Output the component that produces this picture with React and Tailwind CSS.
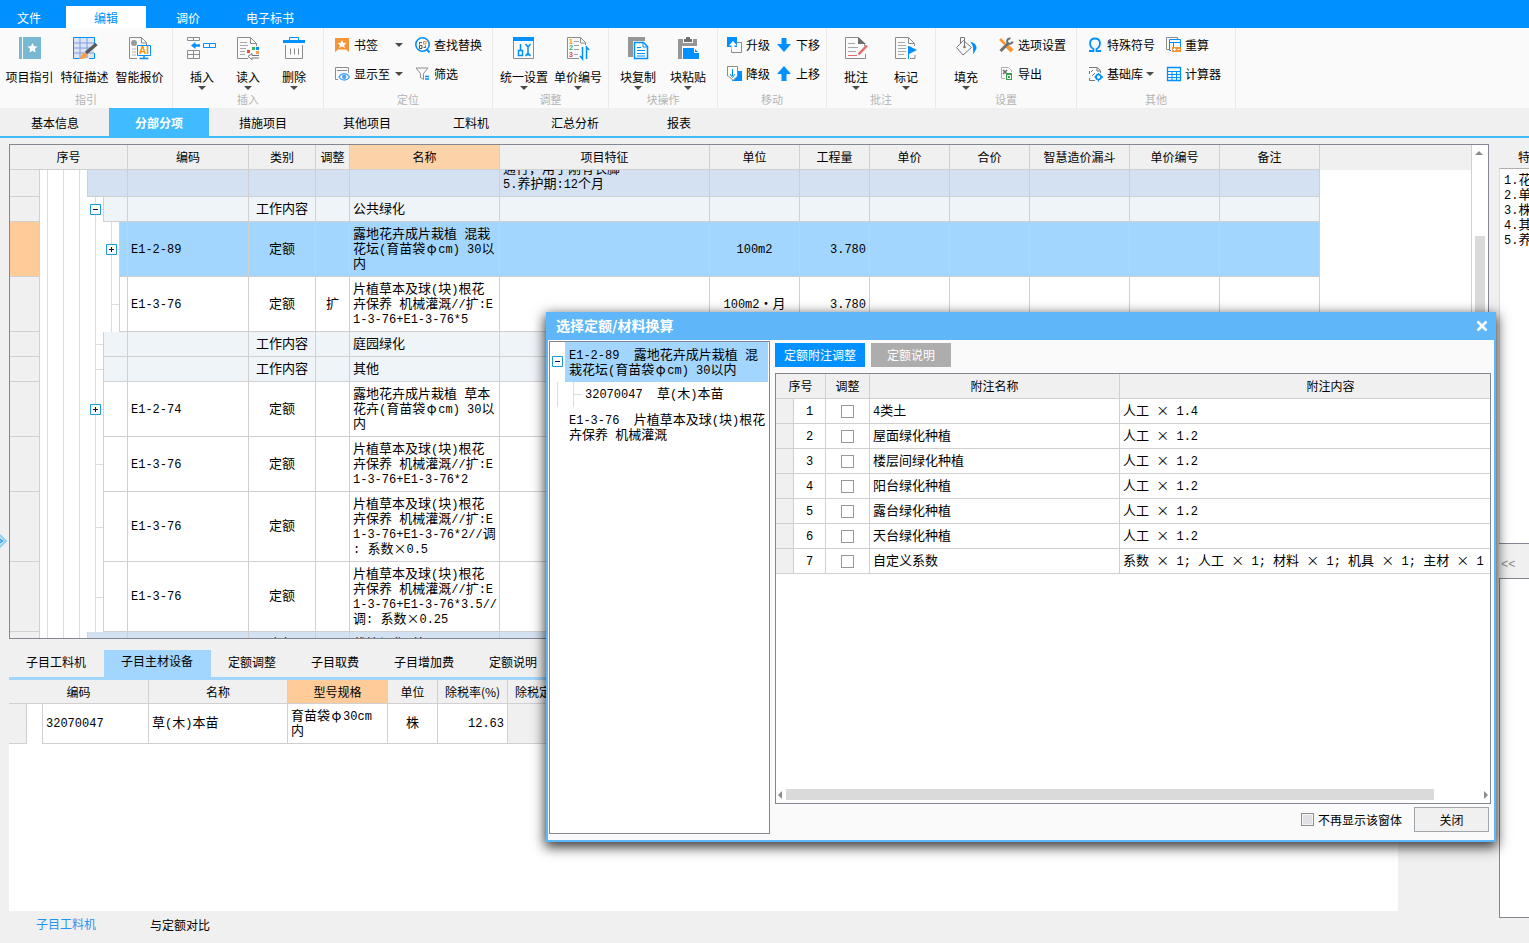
import { Fragment } from 'react'

const BLUE = '#0090ff'
const GRAY = '#8c8c8c'

/* ---------- big ribbon icons ---------- */

const Big = ({ w = 24, children }) => (
  <svg width={w} height="24" viewBox={`0 0 ${w} 24`} fill="none" aria-hidden="true">{children}</svg>
)

const GuideIcon = () => (
  <Big>
    <path d="M1 0h3v22H1zM5 0h18v22H5z" fill="#78b8d3" />
    <path d="M14.500 6l1.500 3.200 3.500.4-2.600 2.400.7 3.500-3.100-1.800-3.100 1.800.7-3.500L9.500 9.600l3.500-.4z" fill="#fff" />
  </Big>
)

const DescribeIcon = () => (
  <Big w={26}>
    <path d="M1 1h21v20H1z" fill="#dbe5f6" />
    <path d="M1 6h21M1 11h21M1 16h21M8 1v20M15 1v20" stroke="#7e9bd8" />
    <path d="M10 21.500H1.500V.500h21V8M22.500 16v5.500H17" stroke={BLUE} />
    <path d="M24.500 7L14 16" stroke="#5a5a5a" strokeWidth="3.500" />
    <path d="M6 22c3-1 3-4 5-6 2-1 5 1 4 3-1 3-5 3-9 3z" fill="#f5a04c" />
  </Big>
)

const AiQuoteIcon = () => (
  <Big>
    <path d="M9 21.500H1.500V.500h12l5 5V8M13.500.500V6h5" stroke={GRAY} />
    <circle cx="6" cy="6" r="3" fill="#9a9a9a" />
    <path d="M4 12h4M4 15h4M4 18h4" stroke="#b5b5b5" />
    <path d="M9.500 8.500h13v10h-13z" fill="#fff" stroke={BLUE} />
    <path d="M16 19v2.500M11.500 21.500h9" stroke={BLUE} strokeWidth="1.500" />
    <text x="11" y="17" fontSize="10" fontWeight="700" fontFamily="Liberation Sans, sans-serif" fill="#f5900c">AI</text>
  </Big>
)

const InsertIcon = () => (
  <Big w={30}>
    <path d="M.500.500h12v3H.500zM6.500.500v3M.500 13.500h12v8H.500zM.500 17.500h12M6.500 13.500v8" stroke={GRAY} />
    <path d="M4 8.500L8.500 5v2.200H13v2.600H8.500V12z" fill={BLUE} />
    <path d="M16.500 6.500h12v4h-12zM22.500 6.500v4" stroke={BLUE} />
  </Big>
)

const ReadIcon = () => (
  <Big>
    <path d="M12 21.500H1.500V.500h13l6 6V9M14.500.500v6h6" stroke={GRAY} />
    <path d="M4 5.500h7M4 8.500h8M4 11.500h6M4 14.500h5M4 17.500h5" stroke="#a8a8a8" />
    <path d="M11 13h3v3h-3z" fill="#f04e23" />
    <path d="M16 10h3v3h-3z" fill="#3fb54a" />
    <path d="M20 10h3v3h-3z" fill={BLUE} />
    <path d="M20 14h3v3h-3z" fill="#f5a04c" />
    <path d="M23 18.500h-7v-2l-4 3 4 3v-1.500h7" stroke="#777" />
  </Big>
)

const DeleteIcon = () => (
  <Big>
    <path d="M7.500 3V.500h9V3" stroke={BLUE} />
    <path d="M1 3h22v3H1z" fill={BLUE} />
    <path d="M3.500 8v13.500h17V8M8.500 11.500v6M12.500 11.500v6M16.500 11.500v6" stroke={GRAY} />
  </Big>
)

const SettingsIcon = () => (
  <Big>
    <path d="M1.500 3v18.500h20V3" stroke={GRAY} />
    <path d="M1 0h21v4H1z" fill={BLUE} />
    <path d="M8.500 7v6M6.500 13.500h4v5h-4zM16 10v8.500M13.500 7l2.500 3L18.500 7M13.500 19l2.500-3 2.500 3" stroke={BLUE} strokeWidth="1.500" />
  </Big>
)

const NumberIcon = () => (
  <Big>
    <path d="M13 21.500H1.500V.500h13l5 5V8M14.500.500V6h5" stroke={GRAY} />
    <path d="M8 4.500h5M8 8.500h5M8 12.500h5M8 17.500h4" stroke="#a0a0a0" />
    <g fontSize="7" fontWeight="700" fontFamily="Liberation Sans, sans-serif">
      <text x="3" y="7" fill="#f5900c">1</text>
      <text x="3" y="13" fill="#3fb54a">2</text>
      <text x="3" y="20" fill="#e04848">3</text>
    </g>
    <path d="M16.500 10v12l-2.500-3M20.500 22V10l2.500 3" stroke={BLUE} strokeWidth="1.500" />
  </Big>
)

const CopyIcon = () => (
  <Big>
    <path d="M2 0h17v4H7v16H2z" fill="#969696" />
    <path d="M8.500 5.500h9l4 4v12h-13z" fill="#fff" stroke={BLUE} strokeWidth="1.500" />
    <path d="M17 5v5h5M11 10.500h4M11 13.500h8M11 16.500h8M11 19h8" stroke={BLUE} />
  </Big>
)

const PasteIcon = () => (
  <Big>
    <path d="M2 2h5v4h10V2h4v7H6v13H2z" fill="#969696" />
    <path d="M8 2h2V0h4v2h2v3H8z" fill="#707070" />
    <path d="M7 11h11l5 5v6H7z" fill={BLUE} />
    <path d="M18.500 10.500V15.500H23" stroke="#fff" />
  </Big>
)

const CommentIcon = () => (
  <Big>
    <path d="M21.500 17v4.500h-20V.500h13l6 6V9" stroke={GRAY} />
    <path d="M14 0v7h8z" fill="#6e6e6e" />
    <path d="M4 6.500h7M4 10.500h10M4 14.500h8" stroke="#a8a8a8" />
    <path d="M4 18.500h9" stroke="#e06a6a" />
    <path d="M23 8.500L14.500 17.500" stroke="#e06a6a" strokeWidth="2.500" />
  </Big>
)

const MarkIcon = () => (
  <Big>
    <path d="M12 21.500H1.500V.500h13l6 6V9M14.500.500v6h6M16 21.500h5V18" stroke={GRAY} />
    <path d="M4 5.500h7M4 8.500h8M4 11.500h8M4 14.500h8M4 17.500h6" stroke="#a8a8a8" />
    <path d="M14.500 9v13" stroke={BLUE} />
    <path d="M15 9l8 4-8 4z" fill={BLUE} />
  </Big>
)

const FillIcon = () => (
  <Big>
    <path d="M2.500 10.500l7-7 8 7-8.500 7.500zM6.500 7V.500h4V10" stroke="#777" />
    <circle cx="10.500" cy="10" r="1.300" fill="#777" />
    <path d="M16 5c4 0 7 3 6.500 6.500l-3 5.500c-1-4 1-8-3.500-12z" fill={BLUE} />
  </Big>
)

/* ---------- small ribbon icons ---------- */

const Small = ({ children }) => (
  <svg width="16" height="16" viewBox="0 0 16 16" fill="none" className="shrink-0" aria-hidden="true">{children}</svg>
)

const BookmarkIcon = () => (
  <Small>
    <path d="M0 1h14v14l-3-2.500H3L0 15z" fill="#f79433" />
    <path d="M7 3l1.400 2.800 3 .3-2.200 2 .7 3L7 9.600l-2.900 1.500.7-3-2.200-2 3-.3z" fill="#fff" />
  </Small>
)

const ShowIcon = () => (
  <Small>
    <path d="M3 13.500H.500V1.500h13V7M2 4.500h10" stroke={GRAY} />
    <path d="M4 11c2.500-4.500 8-4.500 10.500 0-2.500 4-8 4-10.500 0z" fill="#fff" stroke="#4aa3f0" strokeWidth="1.300" />
    <circle cx="9.200" cy="10.800" r="2.200" fill="#4aa3f0" />
  </Small>
)

const FindIcon = () => (
  <Small>
    <circle cx="7.500" cy="7.500" r="6.700" stroke={BLUE} strokeWidth="1.600" />
    <path d="M11.500 12l3 3.500" stroke={BLUE} strokeWidth="2" />
    <path d="M4.500 8.500h2.500v3H4.500zM7 5.500H4.500v2M8.500 10.500h2v-2" stroke="#555" />
    <path d="M8.500 4.500h2.500v2.500H8.500z" stroke="#f5900c" />
  </Small>
)

const FilterIcon = () => (
  <Small>
    <path d="M1 2h12L8.500 7.500v6l-3-2v-4z" stroke={GRAY} />
    <path d="M10 10.500h4M10 13h4" stroke={BLUE} strokeWidth="1.300" />
  </Small>
)

const UpgradeIcon = () => (
  <Small>
    <path d="M9.500 5.500h5v10h-10V12" stroke={GRAY} />
    <path d="M0 0h10v10H7v2H4v-2H0z" fill={BLUE} />
    <path d="M6 4l4 4.500H7.500V13h-3V8.500H2z" fill="#fff" />
  </Small>
)

const DowngradeIcon = () => (
  <Small>
    <path d="M6 5h9v10H5v-4z" fill={BLUE} />
    <path d="M.500.500h10V10L6 14.500 1.500 10H.500z" fill="#fff" stroke={GRAY} />
    <path d="M5.500 3v7M3 8l2.500 3.500L8 8" stroke={BLUE} />
  </Small>
)

const DownIcon = () => (
  <Small><path d="M4.500 1h5v6H14l-7 8-7-8h4.500z" fill={BLUE} /></Small>
)

const UpIcon = () => (
  <Small><path d="M4.500 15h5V8H14L7 0 0 8h4.500z" fill={BLUE} /></Small>
)

const ToolsIcon = () => (
  <Small>
    <path d="M1 2l5 5" stroke="#f79433" strokeWidth="2.500" />
    <path d="M8 9l5 5" stroke="#f79433" strokeWidth="4" />
    <path d="M1.500 14l8-8" stroke="#6e6e6e" strokeWidth="3" />
    <path d="M11.500 1.500a2.700 2.700 0 1 0 2 3" stroke="#6e6e6e" strokeWidth="2" />
  </Small>
)

const ExportIcon = () => (
  <Small>
    <path d="M6 12.500H2.500V1.500h7l3 3V6" stroke="#b0b0b0" />
    <path d="M4 4l4 4M8 4L4 8" stroke="#666" strokeWidth="1.500" />
    <path d="M7 7h6v7H7z" fill="#3c9d4e" />
    <path d="M8.500 9.500h3v3h-3z" stroke="#fff" />
  </Small>
)

const OmegaIcon = () => (
  <Small>
    <path d="M1 14h4.500v-2C.500 9 1 1.500 7 1.500S13.500 9 8.500 12v2H13" stroke={BLUE} strokeWidth="1.800" />
  </Small>
)

const RecalcIcon = () => (
  <Small>
    <path d="M3 12.500H.500V.500h11V3" stroke={GRAY} />
    <path d="M5 13.500H3.500v-11h11V10M3.500 5.500h11M7.500 5.500V10" stroke={BLUE} />
    <path d="M6 10h9v5H6z" fill="#f79433" />
    <path d="M7 12.500h3M8.500 11v3M11.500 12.500h2.500" stroke="#fff" />
  </Small>
)

const LibraryIcon = () => (
  <Small>
    <path d="M7 14.500H1.500V12M1.500 8V5M1 1.500h8l3.500 3V7M9 1.500v3.500h3" stroke="#777" />
    <path d="M3 6l2-2M4 10l3-3" stroke="#777" />
    <circle cx="10.500" cy="11" r="2.500" stroke={BLUE} strokeWidth="1.600" />
    <path d="M10.500 7v2M10.500 13v2.500M6.500 11h2M12.500 11h2.500" stroke={BLUE} strokeWidth="1.300" />
  </Small>
)

const CalcIcon = () => (
  <Small>
    <path d="M1.500 1.500h13v13h-13z" stroke={BLUE} strokeWidth="1.300" />
    <path d="M1 5.500h14M1 8.500h14M1 11.500h14M6 5.500v9M10.500 5.500v9" stroke={BLUE} />
  </Small>
)

/* ---------- ribbon ---------- */

const Caret = ({ className = '' }) => (
  <svg width="8" height="4" viewBox="0 0 8 4" className={className} aria-hidden="true">
    <path d="M0 0h8L4 4z" fill="#4a4a4a" />
  </svg>
)

const BigButton = ({ icon: Icon, label, caret, className }) => (
  <button type="button" className={`flex flex-col items-center pt-[9px] ${className}`}>
    <Icon />
    <span className="mt-2 leading-4 whitespace-nowrap">{label}</span>
    {caret && <Caret className="mt-px shrink-0" />}
  </button>
)

const SmallButton = ({ icon: Icon, label, caret }) => (
  <button type="button" className="flex h-[29px] w-full items-center gap-[3px] whitespace-nowrap">
    <Icon />
    {label}
    {caret && <Caret className="mr-3 ml-auto shrink-0" />}
  </button>
)

const Group = ({ label, className, pad, children }) => (
  <section className={`flex shrink-0 flex-col border-r border-[#e9e9e9] ${className}`}>
    <div className={`flex h-[63px] ${pad}`}>{children}</div>
    <div className="text-center text-[11px] leading-4 text-[#b4b4b4]">{label}</div>
  </section>
)

function Ribbon() {
  return (
    <div className="flex h-20 shrink-0 overflow-hidden bg-[#fafafa]">
      <Group label="指引" className="w-[173px]" pad="pl-[2px]">
        <BigButton icon={GuideIcon} label="项目指引" className="w-[55px]" />
        <BigButton icon={DescribeIcon} label="特征描述" className="w-[55px]" />
        <BigButton icon={AiQuoteIcon} label="智能报价" className="w-[55px]" />
      </Group>
      <Group label="插入" className="w-[151px]" pad="pl-[6px]">
        <BigButton icon={InsertIcon} label="插入" caret className="w-[46px]" />
        <BigButton icon={ReadIcon} label="读入" caret className="w-[46px]" />
        <BigButton icon={DeleteIcon} label="删除" caret className="w-[46px]" />
      </Group>
      <Group label="定位" className="w-[169px]" pad="pl-[11px]">
        <div className="w-20 pt-[2px]">
          <SmallButton icon={BookmarkIcon} label="书签" caret />
          <SmallButton icon={ShowIcon} label="显示至" caret />
        </div>
        <div className="pt-[2px]">
          <SmallButton icon={FindIcon} label="查找替换" />
          <SmallButton icon={FilterIcon} label="筛选" />
        </div>
      </Group>
      <Group label="调整" className="w-[116px]" pad="pl-1">
        <BigButton icon={SettingsIcon} label="统一设置" caret className="w-[54px]" />
        <BigButton icon={NumberIcon} label="单价编号" caret className="w-[54px]" />
      </Group>
      <Group label="块操作" className="w-[109px]" pad="pl-1">
        <BigButton icon={CopyIcon} label="块复制" caret className="w-[50px]" />
        <BigButton icon={PasteIcon} label="块粘贴" caret className="w-[50px]" />
      </Group>
      <Group label="移动" className="w-[109px]" pad="pl-[9px]">
        <div className="w-[50px] pt-[2px]">
          <SmallButton icon={UpgradeIcon} label="升级" />
          <SmallButton icon={DowngradeIcon} label="降级" />
        </div>
        <div className="pt-[2px]">
          <SmallButton icon={DownIcon} label="下移" />
          <SmallButton icon={UpIcon} label="上移" />
        </div>
      </Group>
      <Group label="批注" className="w-[109px]" pad="pl-1">
        <BigButton icon={CommentIcon} label="批注" caret className="w-[50px]" />
        <BigButton icon={MarkIcon} label="标记" caret className="w-[50px]" />
      </Group>
      <Group label="设置" className="w-[141px]" pad="pl-[5px]">
        <BigButton icon={FillIcon} label="填充" caret className="w-[50px]" />
        <div className="pt-[2px] pl-2">
          <SmallButton icon={ToolsIcon} label="选项设置" />
          <SmallButton icon={ExportIcon} label="导出" />
        </div>
      </Group>
      <Group label="其他" className="w-[159px]" pad="pl-[11px]">
        <div className="w-[78px] pt-[2px]">
          <SmallButton icon={OmegaIcon} label="特殊符号" />
          <SmallButton icon={LibraryIcon} label="基础库" caret />
        </div>
        <div className="pt-[2px]">
          <SmallButton icon={RecalcIcon} label="重算" />
          <SmallButton icon={CalcIcon} label="计算器" />
        </div>
      </Group>
    </div>
  )
}

/* ---------- grid text ---------- */

// Latin runs are set in a half-width mono face; × and φ take a full cell.
// The runs keep a short line height so that they never stretch the 15px line.
const GridText = ({ children }) => (
  <span className="block text-[13px] leading-[15px] whitespace-pre">
    {children.split(/([×φ]|[\x20-\x7e]+)/).filter(Boolean).map((run, i) => {
      if (run === '×' || run === 'φ') return <span key={i} className="inline-block w-[13px] text-center leading-none">{run}</span>
      if (/^[\x20-\x7e]/.test(run)) {
        return <span key={i} className="font-['Liberation_Mono','Noto_Sans_CJK_SC',monospace] text-xs leading-[8px]">{run}</span>
      }
      return <Fragment key={i}>{run}</Fragment>
    })}
  </span>
)

const NodeBox = ({ open }) => (
  <svg width="11" height="11" viewBox="0 0 11 11" className="absolute top-1/2 -right-[6px] z-10 -mt-[6px]" aria-hidden="true">
    <path d="M.500.500h10v10H.500z" fill="#fff" stroke="#1f97dc" />
    <path d={open ? 'M3 5.500h5' : 'M3 5.500h5M5.500 3v5'} stroke="#101040" />
  </svg>
)

/* ---------- main grid ---------- */

const columns = [
  { title: '编码', width: 'w-[121px]' },
  { title: '类别', width: 'w-[67px]' },
  { title: '调整', width: 'w-[34px]' },
  { title: '名称', width: 'w-[150px]' },
  { title: '项目特征', width: 'w-[210px]' },
  { title: '单位', width: 'w-[90px]' },
  { title: '工程量', width: 'w-[70px]' },
  { title: '单价', width: 'w-20' },
  { title: '合价', width: 'w-20' },
  { title: '智慧造价漏斗', width: 'w-[100px]' },
  { title: '单价编号', width: 'w-[90px]' },
  { title: '备注', width: 'w-[100px]' },
]

const rows = [
  { level: 0, h: 'h-[27px]', feature: '通行，用于刚有衣脚\n5.养护期:12个月' },
  { level: 1, h: 'h-[25px]', node: 'open', type: '工作内容', name: '公共绿化' },
  { level: 2, h: 'h-[55px]', node: 'closed', selected: true, code: 'E1-2-89', type: '定额', name: '露地花卉成片栽植 混栽\n花坛(育苗袋φcm) 30以\n内', unit: '100m2', qty: '3.780' },
  { level: 2, h: 'h-[55px]', code: 'E1-3-76', type: '定额', adjust: '扩', name: '片植草本及球(块)根花\n卉保养 机械灌溉//扩:E\n1-3-76+E1-3-76*5', unit: '100m2・月', qty: '3.780' },
  { level: 1, h: 'h-[25px]', type: '工作内容', name: '庭园绿化' },
  { level: 1, h: 'h-[25px]', type: '工作内容', name: '其他' },
  { level: 1, h: 'h-[55px]', node: 'closed', code: 'E1-2-74', type: '定额', name: '露地花卉成片栽植 草本\n花卉(育苗袋φcm) 30以\n内' },
  { level: 1, h: 'h-[55px]', code: 'E1-3-76', type: '定额', name: '片植草本及球(块)根花\n卉保养 机械灌溉//扩:E\n1-3-76+E1-3-76*2' },
  { level: 1, h: 'h-[70px]', code: 'E1-3-76', type: '定额', name: '片植草本及球(块)根花\n卉保养 机械灌溉//扩:E\n1-3-76+E1-3-76*2//调\n: 系数×0.5' },
  { level: 1, h: 'h-[70px]', code: 'E1-3-76', type: '定额', name: '片植草本及球(块)根花\n卉保养 机械灌溉//扩:E\n1-3-76+E1-3-76*3.5//\n调: 系数×0.25' },
  { level: 0, h: 'h-[25px]', type: '定额', name: '栽植绿化 外' },
]

const rowColor = (row) => {
  if (row.selected) return 'bg-[#a3d6ff]'
  if (row.level === 0) return 'bg-[#d3e1f2]'
  if (row.type === '工作内容') return 'bg-[#eff4f9]'
  return 'bg-white'
}

const TreeCell = ({ row }) => (
  <div className="flex h-full bg-white">
    <i className="w-2 border-r border-[#dcdcdc]" />
    <i className="w-4 border-r border-[#dcdcdc]" />
    <i className="w-4 border-r border-[#dcdcdc]" />
    {row.level > 0 && (
      <i className="relative w-4 border-r border-[#dcdcdc]">
        {row.level === 1 && row.node && <NodeBox open={row.node === 'open'} />}
      </i>
    )}
    {row.level > 1 && (
      <i className="relative w-4 border-r border-[#dcdcdc]">
        {row.node && <NodeBox open={row.node === 'open'} />}
      </i>
    )}
    <i className="flex w-2 items-center border-r border-[#d0d0d0]">
      {row.level > 0 && <i className="w-full border-t border-[#dcdcdc]" />}
    </i>
    <i className={`flex-1 border-b border-[#d0d0d0] ${rowColor(row)}`} />
  </div>
)

const Cell = ({ text, className = '' }) => (
  <td className={`overflow-hidden border-r border-b border-[#d0d0d0] px-[3px] pt-0 pb-1 ${className}`}>
    {text && <GridText>{text}</GridText>}
  </td>
)

function MainGrid() {
  return (
    <div className="flex h-[495px] shrink-0 overflow-hidden border border-[#828790] bg-white">
      <div className="min-w-0 flex-1 overflow-hidden">
        <table className="w-full table-fixed border-separate border-spacing-0">
          <colgroup>
            <col className="w-[30px]" />
            <col className="w-[88px]" />
            {columns.map((c) => <col key={c.title} className={c.width} />)}
            <col />
          </colgroup>
          <thead>
            <tr className="h-[25px] bg-[#f0f0f0]">
              <th colSpan={2} className="border-r border-b border-[#d0d0d0] font-normal">序号</th>
              {columns.map((c) => (
                <th
                  key={c.title}
                  className={`border-r border-b border-[#d0d0d0] font-normal whitespace-nowrap ${c.title === '名称' ? 'bg-[#fcd3a8]' : ''}`}
                >
                  {c.title}
                </th>
              ))}
              <th />
            </tr>
          </thead>
          <tbody>
            {rows.map((row, i) => (
              <tr key={i} className={rowColor(row)}>
                <td className={`border-r border-b border-[#d0d0d0] p-0 ${row.h} ${row.selected ? 'bg-[#ffcc99]' : 'bg-[#f0f0f0]'}`} />
                <td className={`border-r border-[#d0d0d0] p-0 ${row.h}`}><TreeCell row={row} /></td>
                <Cell text={row.code} />
                <Cell text={row.type} className="text-center" />
                <Cell text={row.adjust} className="text-center" />
                <Cell text={row.name} />
                <td className="border-r border-b border-[#d0d0d0] p-0">
                  {row.feature && (
                    <div className="flex h-[26px] items-end overflow-hidden px-[3px] pb-[6px]">
                      <GridText>{row.feature}</GridText>
                    </div>
                  )}
                </td>
                <Cell text={row.unit} className="text-center" />
                <Cell text={row.qty} className="text-right" />
                <Cell />
                <Cell />
                <Cell />
                <Cell />
                <Cell />
                <td className="bg-white" />
              </tr>
            ))}
          </tbody>
        </table>
      </div>
      <div className="w-[17px] border-l border-[#d0d0d0] pt-[6px]">
        <svg width="8" height="4" viewBox="0 0 8 4" className="ml-[3px]" aria-hidden="true">
          <path d="M0 4h8L4 0z" fill="#8c8c8c" />
        </svg>
        <div className="mt-[81px] ml-[3px] h-60 w-[10px] bg-[#dadada]" />
      </div>
    </div>
  )
}

/* ---------- lower pane ---------- */

const subTabs = ['子目工料机', '子目主材设备', '定额调整', '子目取费', '子目增加费', '定额说明']

function LowerPane() {
  return (
    <div className="mt-[11px] mr-[91px] flex flex-1 flex-col">
      <div className="flex h-[30px] border-b-[3px] border-[#a3d6ff]">
        {subTabs.map((t, i) => (
          <button key={t} type="button" className={`pr-[18px] pl-[17px] whitespace-nowrap ${i === 1 ? 'bg-[#a3d6ff] pb-[5px]' : 'pb-[3px]'}`}>{t}</button>
        ))}
      </div>
      <div className="flex-1 bg-white">
        <table className="w-full table-fixed border-separate border-spacing-0">
          <colgroup>
            <col className="w-[18px]" />
            <col className="w-4" />
            <col className="w-[106px]" />
            <col className="w-[139px]" />
            <col className="w-[100px]" />
            <col className="w-[50px]" />
            <col className="w-[70px]" />
            <col className="w-[75px]" />
            <col />
          </colgroup>
          <thead>
            <tr className="h-6 bg-[#f0f0f0] [&>th]:border-r [&>th]:border-b [&>th]:border-[#d0d0d0] [&>th]:font-normal [&>th]:whitespace-nowrap">
              <th colSpan={3}>编码</th>
              <th>名称</th>
              <th className="bg-[#ffcc99]">型号规格</th>
              <th>单位</th>
              <th>除税率(%)</th>
              <th>除税定额价</th>
              <th />
            </tr>
          </thead>
          <tbody>
            <tr className="h-10 [&>td]:border-[#d0d0d0]">
              <td className="border-r border-b bg-[#f0f0f0]" />
              <td className="border-r" />
              <Cell text="32070047" />
              <Cell text="草(木)本苗" />
              <Cell text={'育苗袋φ30cm\n内'} />
              <Cell text="株" className="text-center" />
              <Cell text="12.63" className="text-right" />
              <td className="border-r border-b bg-[#f0f0f0]" />
              <td />
            </tr>
          </tbody>
        </table>
      </div>
      <div className="flex h-8 items-center gap-[54px] pl-[27px]">
        <button type="button" className="pb-[7px] text-[#1d95f5]">子目工料机</button>
        <button type="button" className="pb-1">与定额对比</button>
      </div>
    </div>
  )
}

function SidePane() {
  return (
    <aside className="ml-[10px] flex w-[30px] shrink-0 flex-col overflow-hidden whitespace-nowrap">
      <div className="h-6 pl-[19px] leading-[26px]">特征</div>
      <div className="h-[375px] border-t border-l border-[#b0b0b0] border-l-[#dcdcdc] bg-white pt-[2px] pl-1">
        {['1.花', '2.单', '3.株', '4.其', '5.养'].map((t) => <GridText key={t}>{t}</GridText>)}
      </div>
      <button type="button" className="h-[35px] border-t border-[#828790] pt-2 pl-[2px] text-left font-['Liberation_Mono',monospace] text-[#8c8c8c]">&lt;&lt;</button>
      <div className="h-[340px] border border-r-0 border-[#828790] bg-white" />
    </aside>
  )
}

/* ---------- dialog ---------- */

const notes = [
  ['4类土', '人工 × 1.4'],
  ['屋面绿化种植', '人工 × 1.2'],
  ['楼层间绿化种植', '人工 × 1.2'],
  ['阳台绿化种植', '人工 × 1.2'],
  ['露台绿化种植', '人工 × 1.2'],
  ['天台绿化种植', '人工 × 1.2'],
  ['自定义系数', '系数 × 1; 人工 × 1; 材料 × 1; 机具 × 1; 主材 × 1'],
]

function QuotaTree() {
  return (
    <div className="w-[221px] shrink-0 border border-[#828790] bg-white pr-px">
      <div className="flex">
        <div className="relative w-2 shrink-0 border-r border-transparent">
          <NodeBox open />
        </div>
        <div className="ml-[7px] flex-1 bg-[#a3d6ff] pt-1 pb-[6px] pl-1">
          <GridText>{'E1-2-89  露地花卉成片栽植 混\n栽花坛(育苗袋φcm) 30以内'}</GridText>
        </div>
      </div>
      <div className="flex h-[25px] items-center">
        <i className="h-full w-2 border-r border-[#dcdcdc]" />
        <i className="h-full w-4 border-r border-[#dcdcdc]" />
        <i className="w-2 border-t border-[#dcdcdc]" />
        <div className="pb-1 pl-[3px]"><GridText>{'32070047  草(木)本苗'}</GridText></div>
      </div>
      <div className="pt-1 pb-[6px] pl-[19px]">
        <GridText>{'E1-3-76  片植草本及球(块)根花\n卉保养 机械灌溉'}</GridText>
      </div>
    </div>
  )
}

function QuotaDialog() {
  return (
    <div
      role="dialog"
      aria-label="选择定额/材料换算"
      className="absolute top-[312px] left-[546px] z-20 flex h-[530px] w-[950px] flex-col border-2 border-t-0 border-[#5fb6f8] bg-[#fafafa] shadow-[0_4px_12px_1px_rgba(0,0,0,0.8)]"
    >
      <div className="flex h-7 shrink-0 items-center justify-between bg-[#5fb6f8] pr-[6px] pl-2 text-white">
        <span className="pb-[2px] text-sm font-bold">选择定额/材料换算</span>
        <button type="button" aria-label="close">
          <svg width="12" height="12" viewBox="0 0 12 12" aria-hidden="true">
            <path d="M1.500 1.500l9 9M10.500 1.500l-9 9" stroke="#fff" strokeWidth="2.500" />
          </svg>
        </button>
      </div>
      <div className="flex min-h-0 flex-1 gap-[5px] pt-px pr-[3px] pb-[6px] pl-px">
        <QuotaTree />
        <div className="flex min-w-0 flex-1 flex-col pb-[2px]">
          <div className="flex gap-[6px] pt-[2px] text-white">
            <button type="button" className="h-6 w-[90px] bg-[#0090ff]">定额附注调整</button>
            <button type="button" className="h-6 w-20 bg-[#adadad]">定额说明</button>
          </div>
          <div className="mt-[6px] flex min-h-0 flex-1 flex-col overflow-hidden border border-[#828790] bg-white">
            <table className="w-[766px] table-fixed border-separate border-spacing-0">
              <colgroup>
                <col className="w-[18px]" />
                <col className="w-8" />
                <col className="w-11" />
                <col className="w-[250px]" />
                <col />
              </colgroup>
              <thead>
                <tr className="h-[25px] bg-[#f0f0f0] [&>th]:border-r [&>th]:border-b [&>th]:border-[#d0d0d0] [&>th]:font-normal">
                  <th colSpan={2}>序号</th>
                  <th>调整</th>
                  <th>附注名称</th>
                  <th>附注内容</th>
                </tr>
              </thead>
              <tbody>
                {notes.map(([name, content], i) => (
                  <tr key={name} className="h-[25px]">
                    <td className="border-r border-b border-[#d0d0d0] bg-[#f0f0f0]" />
                    <Cell text={String(i + 1)} className="text-center" />
                    <td className="border-r border-b border-[#d0d0d0] p-0">
                      <input
                        type="checkbox"
                        aria-label={name}
                        className="mx-auto block size-[13px] appearance-none border border-[#999] bg-white"
                      />
                    </td>
                    <Cell text={name} />
                    <Cell text={content} />
                  </tr>
                ))}
              </tbody>
            </table>
            <div className="mt-auto mb-[3px] flex h-[11px] items-center px-[2px]">
              <svg width="4" height="8" viewBox="0 0 4 8" aria-hidden="true"><path d="M4 0v8L0 4z" fill="#8c8c8c" /></svg>
              <div className="mr-[50px] ml-1 h-full flex-1 bg-[#dadada]" />
              <svg width="4" height="8" viewBox="0 0 4 8" aria-hidden="true"><path d="M0 0v8l4-4z" fill="#8c8c8c" /></svg>
            </div>
          </div>
          <div className="mt-[3px] flex items-center justify-end pr-[2px]">
            <label className="flex items-center gap-1">
              <input
                type="checkbox"
                className="size-[13px] appearance-none border border-[#8e8f8f] bg-[#dfe1e6] shadow-[inset_0_0_0_1px_#f4f4f4]"
              />
              不再显示该窗体
            </label>
            <button type="button" className="ml-3 h-[25px] w-[75px] border border-[#a0a5a9] bg-[#f0f0f0]">关闭</button>
          </div>
        </div>
      </div>
    </div>
  )
}

/* ---------- page ---------- */

const mainTabs = ['基本信息', '分部分项', '措施项目', '其他项目', '工料机', '汇总分析', '报表']

function App() {
  return (
    <div className="relative flex min-h-screen flex-col overflow-hidden bg-[#f0f0f0] font-['Noto_Sans_CJK_SC',sans-serif] text-xs leading-4 text-black">
      <nav className="flex h-7 shrink-0 items-end bg-[#0090ff] text-white">
        <button type="button" className="mr-2 h-[22px] w-[58px] pt-px">文件</button>
        <button type="button" className="h-[22px] w-20 bg-white pt-px text-[#0090ff]">编辑</button>
        <button type="button" className="h-[22px] w-[84px] pt-px">调价</button>
        <button type="button" className="h-[22px] w-20 pt-px">电子标书</button>
      </nav>

      <Ribbon />

      <nav className="flex h-[30px] shrink-0 border-b-2 border-[#41bbff] pl-[3px]">
        {mainTabs.map((t, i) => (
          <button
            key={t}
            type="button"
            className={i === 1 ? 'mx-[2px] w-[100px] bg-[#41bbff] pt-px font-bold text-white' : 'w-[104px] pt-px'}
          >
            {t}
          </button>
        ))}
      </nav>

      <main className="flex flex-1 pt-[6px]">
        <div className="flex min-w-0 flex-1 flex-col pl-[9px]">
          <MainGrid />
          <LowerPane />
        </div>
        <SidePane />
      </main>

      <svg width="8" height="16" viewBox="0 0 8 16" fill="none" className="absolute top-[533px] left-0" aria-hidden="true">
        <path d="M-1 1.500L6 8l-7 6.500" stroke="#8ad0f5" strokeWidth="2" />
        <path d="M-1 5.500L2.500 8-1 10.500" stroke="#2f9fe8" strokeWidth="1.500" />
      </svg>

      <QuotaDialog />
    </div>
  )
}

export default App
